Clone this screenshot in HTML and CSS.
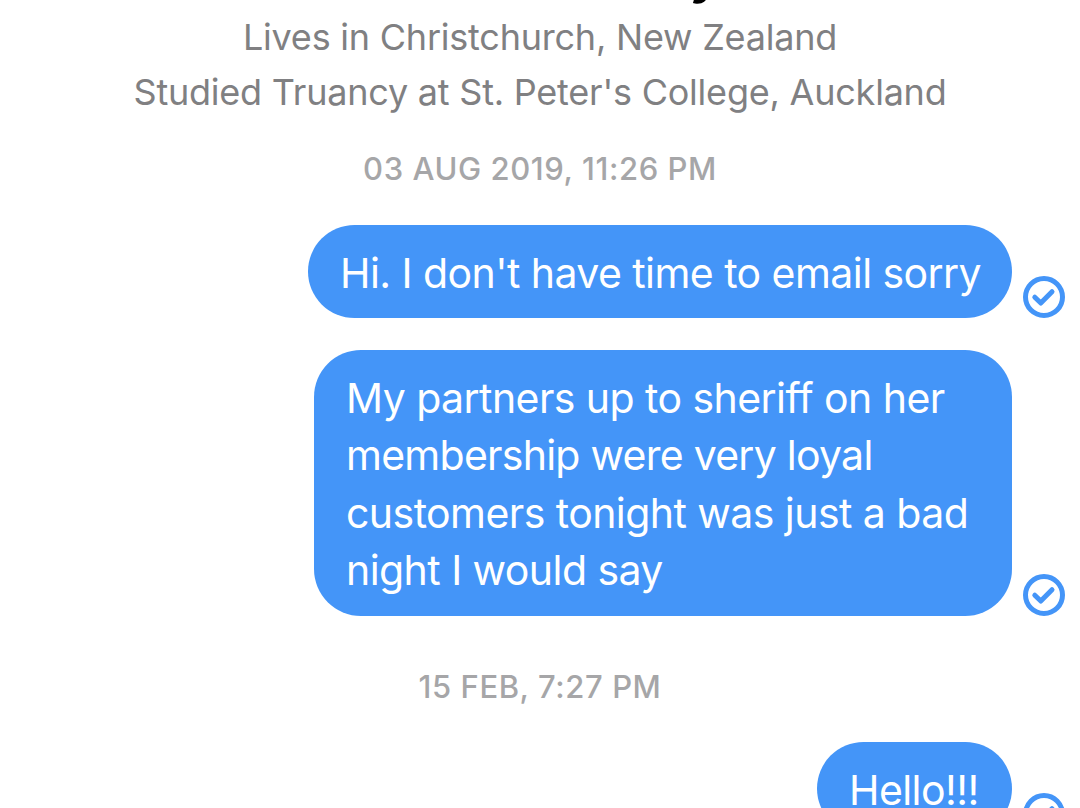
FILE: index.html
```html
<!DOCTYPE html>
<html lang="en">
<head>
    <meta charset="UTF-8">
    <meta name="viewport" content="width=device-width, initial-scale=1.0">
    <title>Messages</title>
    <link rel="stylesheet" href="styles.css">
</head>
<body>
    <div class="chat">
        <div class="profile">
            <h1>y</h1>
            <p>Lives in Christchurch, New Zealand</p>
            <p>Studied Truancy at St. Peter's College, Auckland</p>
        </div>

        <p class="date date-first">03 AUG 2019, 11:26 PM</p>

        <div class="row">
            <div class="bubble short"><span class="line">Hi. I don't have time to email sorry</span></div>
            <svg class="tick" viewBox="0 0 42 42"><circle cx="21" cy="21" r="18.5"/><path d="M11.8 21.2l6 5.8 11.2-11.3"/></svg>
        </div>

        <div class="row">
            <div class="bubble long">
                <span class="line">My partners up to sheriff on her</span>
                <span class="line tight">membership were very loyal</span>
                <span class="line">customers tonight was just a bad</span>
                <span class="line">night I would say</span>
            </div>
            <svg class="tick" viewBox="0 0 42 42"><circle cx="21" cy="21" r="18.5"/><path d="M11.8 21.2l6 5.8 11.2-11.3"/></svg>
        </div>

        <p class="date date-second">15 FEB, 7:27 PM</p>

        <div class="row">
            <div class="bubble hello"><span class="line">Hello!!!</span></div>
            <svg class="tick" viewBox="0 0 42 42"><circle cx="21" cy="21" r="18.5"/><path d="M11.8 21.2l6 5.8 11.2-11.3"/></svg>
        </div>
    </div>
</body>
</html>
```
FILE: styles.css
```css
* {
    box-sizing: border-box;
}

body {
    margin: 0;
    background: #fff;
    font-family: Inter, "Liberation Sans", sans-serif;
    overflow: hidden;
}

.chat {
    height: 808px;
    overflow: hidden;
}

h1,
p {
    margin: 0;
    text-align: center;
    white-space: nowrap;
}

h1 {
    height: 55px;
    margin-top: -45px;
    padding-left: 330px;
    font-size: 50px;
    line-height: 41px;
}

.profile p {
    height: 55px;
    line-height: 55px;
    font-size: 36px;
    letter-spacing: -0.22px;
    color: #808082;
}

.date {
    font-size: 31px;
    font-weight: 500;
    line-height: 40px;
    letter-spacing: 0.58px;
    color: #a6a6a8;
}

.date-first {
    margin-top: 29px;
    margin-bottom: 35.5px;
}

.date-second {
    margin-top: 51px;
    margin-bottom: 35px;
}

.row {
    display: flex;
    justify-content: flex-end;
    align-items: flex-end;
    gap: 10.5px;
    padding-right: 15.5px;
    margin-bottom: 31.5px;
}

.bubble {
    padding: 20px 32px 16px;
    border-radius: 47px;
    background: #4495f8;
    color: #fff;
    font-size: 41px;
    line-height: 57.5px;
    letter-spacing: -0.56px;
    white-space: nowrap;
}

.short {
    width: 704px;
}

.long {
    width: 698px;
}

.hello {
    width: 195px;
}

.line {
    display: block;
}

.tight {
    letter-spacing: -0.74px;
}

.tick {
    width: 42px;
    height: 42px;
    fill: none;
    stroke: #4495f8;
    stroke-width: 5;
    stroke-linecap: round;
    stroke-linejoin: round;
}
```
